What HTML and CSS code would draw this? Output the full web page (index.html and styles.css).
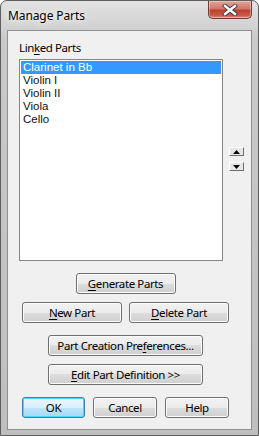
FILE: index.html
```html
<!doctype html>
<html lang="en">
    <head>
        <meta charset="UTF-8">
        <title>Manage Parts</title>
        <link rel="stylesheet" href="styles.css">
    </head>
    <body>
        <div class="window">
            <div class="titlebar">
                <span class="title">Manage Parts</span>
                <div class="close">
                    <svg width="16" height="12" viewBox="0 0 16 12">
                        <path d="M3 2 L13 10 M13 2 L3 10" stroke="#3a3a3a" stroke-width="4.2" stroke-linecap="square"/>
                        <path d="M3 2 L13 10 M13 2 L3 10" stroke="#fff" stroke-width="2.4" stroke-linecap="square"/>
                    </svg>
                </div>
            </div>
            <div class="client">
                <div class="label">Lin<u>k</u>ed Parts</div>
                <div class="top">
                    <ul class="list">
                        <li class="sel">Clarinet in Bb</li>
                        <li>Violin I</li>
                        <li>Violin II</li>
                        <li>Viola</li>
                        <li>Cello</li>
                    </ul>
                    <div class="arrows">
                        <div class="arrow"><svg width="7" height="4" viewBox="0 0 7 4"><path d="M3.5 0 L7 4 L0 4 Z" fill="#000"/></svg></div>
                        <div class="arrow"><svg width="7" height="4" viewBox="0 0 7 4"><path d="M0 0 L7 0 L3.5 4 Z" fill="#000"/></svg></div>
                    </div>
                </div>
                <div class="buttons">
                    <button class="btn w100"><u>G</u>enerate Parts</button>
                    <div class="row">
                        <button class="btn w100"><u>N</u>ew Part</button>
                        <button class="btn w100"><u>D</u>elete Part</button>
                    </div>
                    <button class="btn wide gap12">Part Creation Pre<u>f</u>erences...</button>
                    <button class="btn wide"><u>E</u>dit Part Definition &gt;&gt;</button>
                    <div class="row gap12">
                        <button class="btn w63 default">OK</button>
                        <button class="btn w64">Cancel</button>
                        <button class="btn w64">Help</button>
                    </div>
                </div>
            </div>
        </div>
    </body>
</html>
```

FILE: styles.css
```css
body {
    margin: 0;
    background: #fff;
}
.window {
    width: 259px;
    height: 436px;
    box-sizing: border-box;
    border: 1px solid #5d5d5d;
    border-radius: 7px 7px 0 0;
    background: linear-gradient(#e2e2e2, #c9c9c9 40px, #bfbfbf);
    display: flex;
    flex-direction: column;
    font-family: "Noto Sans", sans-serif;
}
.titlebar {
    height: 29px;
    display: flex;
    align-items: flex-start;
    justify-content: space-between;
    padding: 0 6px 0 7px;
}
.title {
    margin-top: 6px;
    font-size: 12px;
    letter-spacing: -0.1px;
    color: #000;
    text-shadow: 0 0 8px #fff, 0 0 4px #fff;
}
.close {
    width: 44px;
    height: 18px;
    box-sizing: border-box;
    border: 1px solid #6e3b35;
    border-top: none;
    border-radius: 0 0 5px 5px;
    background: linear-gradient(#e3a397, #d0776a 45%, #c0402f 55%, #c85a48 85%, #e09080);
    display: flex;
    align-items: center;
    justify-content: center;
    box-shadow: inset 0 0 0 1px rgba(255, 255, 255, 0.35);
}
.client {
    margin: 0 6px 0 6px;
    height: 400px;
    box-sizing: border-box;
    border: 1px solid #8f8f8f;
    background: #f0f0f0;
    padding: 0 0 0 11px;
}
.label {
    margin-top: 9px;
    font-size: 11.5px;
    line-height: 16px;
    letter-spacing: -0.4px;
}
.label u, .btn u {
    text-decoration-thickness: 1px;
    text-underline-offset: 2px;
}
.top {
    margin-top: 3px;
    display: flex;
}
.list {
    margin: 0;
    list-style: none;
    width: 204px;
    height: 202px;
    box-sizing: border-box;
    border: 1px solid #858585;
    background: #fff;
    padding: 1px;
    font-family: "Liberation Sans", sans-serif;
    font-size: 11.5px;
    color: #101010;
}
.list li {
    height: 13px;
    line-height: 13px;
    padding-left: 2px;
}
.list li.sel {
    background: #3399ff;
    color: #fff;
}
.arrows {
    margin: 88px 0 0 6px;
    display: flex;
    flex-direction: column;
    gap: 6px;
}
.arrow {
    width: 15px;
    height: 9px;
    box-sizing: border-box;
    border: 1px solid;
    border-color: #fff #6e6e6e #6e6e6e #fff;
    background: #e6e6e6;
    display: flex;
    align-items: center;
    justify-content: center;
}
.buttons {
    width: 207px;
    margin: 12px 0 0 3px;
    display: flex;
    flex-direction: column;
    align-items: center;
    gap: 8px;
}
.row {
    display: flex;
    width: 100%;
    justify-content: space-between;
}
.gap12 {
    margin-top: 4px;
}
.btn {
    height: 21px;
    box-sizing: border-box;
    border: 1px solid #707070;
    border-radius: 3px;
    background: linear-gradient(#f2f2f2, #ebebeb 50%, #dddddd 50%, #cfcfcf);
    box-shadow: inset 0 0 0 1px #fcfcfc;
    font-family: "Noto Sans", sans-serif;
    font-size: 11.5px;
    letter-spacing: -0.4px;
    color: #000;
    padding: 0;
    line-height: 17px;
}
.w100 {
    width: 100px;
}
.wide {
    width: 155px;
}
.w63 {
    width: 63px;
}
.w64 {
    width: 64px;
}
.default {
    border-color: #3c7fb1;
    background: linear-gradient(#eaf6fd, #d9f0fc 50%, #bee6fd 50%, #a7d9f5);
    box-shadow: inset 0 0 0 1px #48d8fb;
}
```
